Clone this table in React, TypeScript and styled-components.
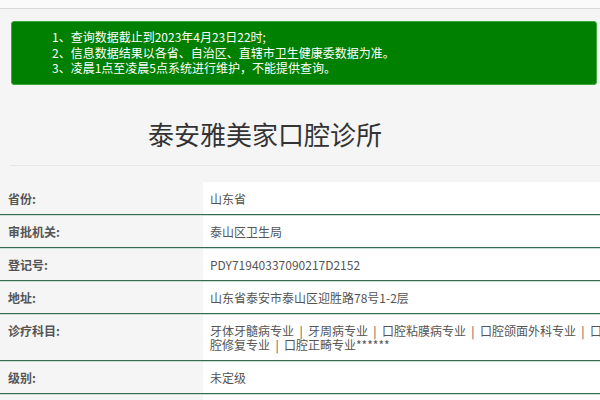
import React from "react";
import styled, { createGlobalStyle } from "styled-components";

const Global = createGlobalStyle`
  html, body { margin: 0; padding: 0; background: #f5f5f5; overflow: hidden; }
  body { font-family: "Noto Sans CJK SC", "Noto Sans", sans-serif; width: 600px; }
`;

const Page = styled.div`
  width: 600px;
  height: 400px;
  overflow: hidden;
  background: #f5f5f5;
`;

const TopBar = styled.div`
  height: 8px;
  background: #fafafa;
  border-bottom: 1px solid #d9d9d9;
`;

const Notice = styled.ol`
  list-style: none;
  margin: 12px 3px 0 11px;
  padding: 7px 15px 8px 40px;
  background: #008000;
  border: 1px solid #3aa83a;
  border-radius: 3px;
  color: #fff;
  font-size: 12px;
  line-height: 15.5px;
`;

const NoticeItem = styled.li``;

const Title = styled.h1`
  margin: 0 0 0 10px;
  padding: 32px 80px 14px 0;
  text-align: center;
  font-size: 26px;
  line-height: 34px;
  font-weight: normal;
  color: #333;
  border-bottom: 1px solid #e6e6e6;
`;

const Table = styled.div`
  margin-top: 16px;
  width: 620px;
  display: grid;
  grid-template-columns: 203px 1fr;
`;

const Row = styled.div`
  display: contents;
`;

const Cell = styled.div<{ $label?: boolean; $first?: boolean }>`
  padding: 9px ${(p) => (p.$label ? "8px" : "12px")} 8px ${(p) => (p.$label ? "8px" : "7px")};
  font-size: 12px;
  line-height: 14px;
  color: #555;
  font-weight: ${(p) => (p.$label ? "bold" : "normal")};
  background: ${(p) => (p.$label ? "#f5f5f5" : "#fff")};
  border-top: 1px solid ${(p) => (p.$first ? "transparent" : "#cddfd5")};
  border-bottom: 1px solid #356b52;
`;

const rows: [string, string][] = [
  ["省份:", "山东省"],
  ["审批机关:", "泰山区卫生局"],
  ["登记号:", "PDY71940337090217D2152"],
  ["地址:", "山东省泰安市泰山区迎胜路78号1-2层"],
  [
    "诊疗科目:",
    "牙体牙髓病专业\u00a0\u00a0|\u00a0\u00a0牙周病专业\u00a0\u00a0|\u00a0\u00a0口腔粘膜病专业\u00a0\u00a0|\u00a0\u00a0口腔颌面外科专业\u00a0\u00a0|\u00a0\u00a0口腔修复专业\u00a0\u00a0|\u00a0\u00a0口腔正畸专业******",
  ],
  ["级别:", "未定级"],
  ["", ""],
];

export default function App() {
  return (
    <Page>
      <Global />
      <TopBar />
      <Notice>
        <NoticeItem>1、查询数据截止到2023年4月23日22时;</NoticeItem>
        <NoticeItem>2、信息数据结果以各省、自治区、直辖市卫生健康委数据为准。</NoticeItem>
        <NoticeItem>3、凌晨1点至凌晨5点系统进行维护，不能提供查询。</NoticeItem>
      </Notice>
      <Title>泰安雅美家口腔诊所</Title>
      <Table>
        {rows.map(([k, v], i) => (
          <Row key={i}>
            <Cell $label $first={i === 0}>{k || "\u00a0"}</Cell>
            <Cell $first={i === 0}>{v || "\u00a0"}</Cell>
          </Row>
        ))}
      </Table>
    </Page>
  );
}
